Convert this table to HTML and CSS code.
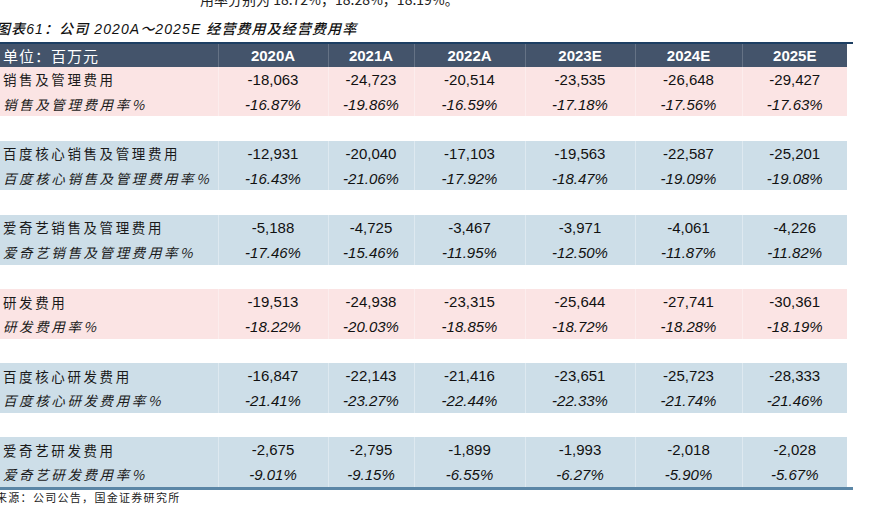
FILE: index.html
```html
<!DOCTYPE html>
<html lang="zh-CN">
<head>
<meta charset="utf-8">
<title>经营费用及经营费用率</title>
<link rel="stylesheet" href="styles.css">
</head>
<body>
<div class="page">
  <p class="para">用率分别为 18.72%，18.28%，18.19%。</p>
  <p class="title">图表61：公司 2020A～2025E 经营费用及经营费用率</p>
  <div class="frame">
    <table class="data">
      <colgroup>
        <col class="c0"><col class="c1"><col class="c2"><col class="c3"><col class="c4"><col class="c5"><col class="c6">
      </colgroup>
      <thead>
        <tr class="head"><th class="lab">单位：百万元</th><th>2020A</th><th>2021A</th><th>2022A</th><th>2023E</th><th>2024E</th><th>2025E</th></tr>
      </thead>
      <tbody>
        <tr class="pink"><td class="lab">销售及管理费用</td><td>-18,063</td><td>-24,723</td><td>-20,514</td><td>-23,535</td><td>-26,648</td><td>-29,427</td></tr>
        <tr class="pink it"><td class="lab">销售及管理费用率%</td><td>-16.87%</td><td>-19.86%</td><td>-16.59%</td><td>-17.18%</td><td>-17.56%</td><td>-17.63%</td></tr>
        <tr class="gap"><td colspan="7"></td></tr>
        <tr class="blue"><td class="lab">百度核心销售及管理费用</td><td>-12,931</td><td>-20,040</td><td>-17,103</td><td>-19,563</td><td>-22,587</td><td>-25,201</td></tr>
        <tr class="blue it"><td class="lab">百度核心销售及管理费用率%</td><td>-16.43%</td><td>-21.06%</td><td>-17.92%</td><td>-18.47%</td><td>-19.09%</td><td>-19.08%</td></tr>
        <tr class="gap"><td colspan="7"></td></tr>
        <tr class="blue"><td class="lab">爱奇艺销售及管理费用</td><td>-5,188</td><td>-4,725</td><td>-3,467</td><td>-3,971</td><td>-4,061</td><td>-4,226</td></tr>
        <tr class="blue it"><td class="lab">爱奇艺销售及管理费用率%</td><td>-17.46%</td><td>-15.46%</td><td>-11.95%</td><td>-12.50%</td><td>-11.87%</td><td>-11.82%</td></tr>
        <tr class="gap"><td colspan="7"></td></tr>
        <tr class="pink"><td class="lab">研发费用</td><td>-19,513</td><td>-24,938</td><td>-23,315</td><td>-25,644</td><td>-27,741</td><td>-30,361</td></tr>
        <tr class="pink it"><td class="lab">研发费用率%</td><td>-18.22%</td><td>-20.03%</td><td>-18.85%</td><td>-18.72%</td><td>-18.28%</td><td>-18.19%</td></tr>
        <tr class="gap"><td colspan="7"></td></tr>
        <tr class="blue"><td class="lab">百度核心研发费用</td><td>-16,847</td><td>-22,143</td><td>-21,416</td><td>-23,651</td><td>-25,723</td><td>-28,333</td></tr>
        <tr class="blue it"><td class="lab">百度核心研发费用率%</td><td>-21.41%</td><td>-23.27%</td><td>-22.44%</td><td>-22.33%</td><td>-21.74%</td><td>-21.46%</td></tr>
        <tr class="gap"><td colspan="7"></td></tr>
        <tr class="blue"><td class="lab">爱奇艺研发费用</td><td>-2,675</td><td>-2,795</td><td>-1,899</td><td>-1,993</td><td>-2,018</td><td>-2,028</td></tr>
        <tr class="blue it"><td class="lab">爱奇艺研发费用率%</td><td>-9.01%</td><td>-9.15%</td><td>-6.55%</td><td>-6.27%</td><td>-5.90%</td><td>-5.67%</td></tr>
      </tbody>
    </table>
  </div>
  <p class="source">来源：公司公告，国金证券研究所</p>
</div>
</body>
</html>
```
FILE: styles.css
```css
html, body {
  margin: 0;
  padding: 0;
  background: #ffffff;
}

.page {
  width: 870px;
  height: 518px;
  overflow: hidden;
  font-family: "Liberation Sans", "Noto Sans CJK SC", sans-serif;
  color: #111111;
}

.para {
  margin: -9px 0 0 0;
  padding-left: 200px;
  font-family: "Noto Sans CJK SC", sans-serif;
  font-size: 14px;
  line-height: 16px;
  letter-spacing: 0;
  color: #222222;
}

.title {
  margin: 13px 0 0 -4px;
  font-family: "Liberation Sans", "Noto Sans CJK SC", sans-serif;
  font-size: 14px;
  line-height: 18px;
  font-style: italic;
  font-weight: 500;
  letter-spacing: 1.1px;
  color: #111111;
}

.frame {
  margin-top: 4px;
  width: 853px;
  border-top: 2px solid #1d3f63;
  border-bottom: 3px solid #5b86a6;
}

.data {
  width: 847px;
  border-collapse: collapse;
  table-layout: fixed;
}

.c0 { width: 218px; }
.c1 { width: 110px; }
.c2 { width: 86px; }
.c3 { width: 111px; }
.c4 { width: 110px; }
.c5 { width: 107px; }
.c6 { width: 105px; }

.data th,
.data td {
  padding: 0;
  text-align: center;
  white-space: nowrap;
  font-size: 15px;
  border-left: 1px solid rgba(255, 255, 255, 0.35);
}

.data th:first-child,
.data td:first-child {
  border-left: none;
}

.head th {
  height: 23px;
  background: #44546b;
  color: #ffffff;
  font-weight: bold;
  border-left-color: rgba(255, 255, 255, 0.18);
}

.head th.lab {
  font-family: "Noto Sans CJK SC", sans-serif;
  font-weight: normal;
  font-size: 15px;
  letter-spacing: 1px;
}

.data tbody td {
  height: 24.7px;
}

.data .lab {
  text-align: left;
  padding-left: 3px;
}

.data td.lab {
  font-family: "Noto Sans CJK SC", sans-serif;
  font-size: 13.5px;
  letter-spacing: 2.6px;
  color: #1a1a1a;
}

.pink td {
  background: #fbe4e4;
}

.blue td {
  background: #cddee8;
}

.it td {
  font-style: italic;
}

.gap td {
  background: #ffffff;
  border-left: none;
}

.source {
  margin: 0 0 0 -4px;
  font-family: "Noto Sans CJK SC", sans-serif;
  font-size: 11px;
  line-height: 14px;
  letter-spacing: 1.3px;
  color: #222222;
}
```
